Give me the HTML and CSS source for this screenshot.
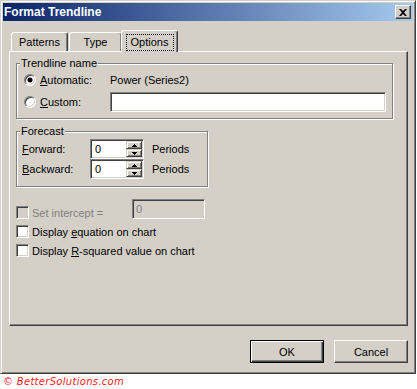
FILE: index.html
```html
<!DOCTYPE html>
<html>
<head>
<meta charset="utf-8">
<title>Format Trendline</title>
<link rel="stylesheet" href="styles.css">
</head>
<body>
<div class="window">
  <div class="titlebar">
    <span class="title">Format Trendline</span>
    <span class="close"><svg width="8" height="7" viewBox="0 0 8 7"><path d="M0 0h2l2 2 2-2h2L5 3.5 8 7H6L4 5 2 7H0l3-3.5z" fill="#000"/></svg></span>
  </div>
  <div class="tabs">
    <div class="tab tab-patterns">Patterns</div>
    <div class="tab tab-type">Type</div>
    <div class="tab tab-active"><span class="focus">Options</span></div>
  </div>
  <div class="panel">
    <fieldset class="group group-name">
      <legend>Trendline name</legend>
      <div class="row radio-row">
        <span class="radio checked"></span>
        <span class="rlabel"><u>A</u>utomatic:</span>
        <span class="value">Power (Series2)</span>
      </div>
      <div class="row radio-row">
        <span class="radio"></span>
        <span class="rlabel"><u>C</u>ustom:</span>
        <span class="textbox wide"></span>
      </div>
    </fieldset>
    <fieldset class="group group-forecast">
      <legend>Forecast</legend>
      <div class="spin-row">
        <span class="flabel"><u>F</u>orward:</span>
        <span class="spinbox">
          <span class="spin-text">0</span>
          <span class="spin-btns">
            <span class="spin-btn"><svg width="5" height="3" viewBox="0 0 5 3"><rect x="2" y="0" width="1" height="1"/><rect x="1" y="1" width="3" height="1"/><rect x="0" y="2" width="5" height="1"/></svg></span>
            <span class="spin-btn"><svg width="5" height="3" viewBox="0 0 5 3"><rect x="0" y="0" width="5" height="1"/><rect x="1" y="1" width="3" height="1"/><rect x="2" y="2" width="1" height="1"/></svg></span>
          </span>
        </span>
        <span class="periods">Periods</span>
      </div>
      <div class="spin-row">
        <span class="flabel"><u>B</u>ackward:</span>
        <span class="spinbox">
          <span class="spin-text">0</span>
          <span class="spin-btns">
            <span class="spin-btn"><svg width="5" height="3" viewBox="0 0 5 3"><rect x="2" y="0" width="1" height="1"/><rect x="1" y="1" width="3" height="1"/><rect x="0" y="2" width="5" height="1"/></svg></span>
            <span class="spin-btn"><svg width="5" height="3" viewBox="0 0 5 3"><rect x="0" y="0" width="5" height="1"/><rect x="1" y="1" width="3" height="1"/><rect x="2" y="2" width="1" height="1"/></svg></span>
          </span>
        </span>
        <span class="periods">Periods</span>
      </div>
    </fieldset>
    <div class="checks">
      <div class="check-row disabled">
        <span class="checkbox"></span>
        <span class="clabel intercept-label">Set intercept =</span>
        <span class="textbox intercept-input">0</span>
      </div>
      <div class="check-row">
        <span class="checkbox"></span>
        <span class="clabel">Display <u>e</u>quation on chart</span>
      </div>
      <div class="check-row">
        <span class="checkbox"></span>
        <span class="clabel">Display <u>R</u>-squared value on chart</span>
      </div>
    </div>
  </div>
  <div class="footer">
    <span class="btn default">OK</span>
    <span class="btn">Cancel</span>
  </div>
</div>
<div class="watermark">© BetterSolutions.com</div>
</body>
</html>
```

FILE: styles.css
```css
* { box-sizing: border-box; }

body {
  margin: 0;
  background: #fff;
  font-family: "Liberation Sans", Arial, sans-serif;
  font-size: 11px;
  color: #000;
}

u { text-decoration: underline; text-underline-offset: 1px; }

.window {
  width: 416px;
  height: 374px;
  background: #d4d0c8;
  border: 1px solid;
  border-color: #d4d0c8 #404040 #404040 #d4d0c8;
  box-shadow: inset 1px 1px 0 #fff, inset -1px -1px 0 #808080;
  padding: 2px;
  display: flex;
  flex-direction: column;
}

.titlebar {
  height: 18px;
  flex: none;
  background: linear-gradient(to right, #0a246a, #a6caf0);
  display: flex;
  align-items: center;
  justify-content: space-between;
  padding: 0 2px 0 1px;
}

.title {
  color: #fff;
  font-weight: bold;
  font-size: 12px;
  line-height: 18px;
}

.close {
  width: 16px;
  height: 14px;
  background: #d4d0c8;
  border: 1px solid;
  border-color: #fff #404040 #404040 #fff;
  box-shadow: inset -1px -1px 0 #808080;
  display: flex;
  align-items: center;
  justify-content: center;
}
.close svg { display: block; }

.tabs {
  display: flex;
  align-items: flex-end;
  height: 21px;
  flex: none;
  margin: 9px 0 0 8px;
}

.tab {
  height: 19px;
  background: #d4d0c8;
  border: 1px solid;
  border-bottom: 0;
  border-color: #fff #404040 transparent #fff;
  box-shadow: inset -1px 0 0 #808080;
  border-radius: 3px 3px 0 0;
  display: flex;
  align-items: center;
  justify-content: center;
  margin-right: 1px;
  line-height: 13px;
  padding-top: 1px;
}

.tab-patterns { width: 57px; }
.tab-type { width: 53px; }

.tab-active {
  width: 57px;
  height: 22px;
  margin: 0 -2px -1px -2px;
  position: relative;
  z-index: 1;
  align-items: flex-start;
  padding-top: 3px;
}

.focus {
  display: block;
  width: 48px;
  height: 17px;
  border: 1px dotted #000;
  text-align: center;
  line-height: 15px;
}

.panel {
  width: 399px;
  height: 275px;
  flex: none;
  margin-left: 6px;
  border: 1px solid;
  border-color: #fff #404040 #404040 #fff;
  box-shadow: inset -1px -1px 0 #808080;
}

.group {
  margin: 5px 0 0 6px;
  padding: 0 0 6px 3px;
  border: 1px solid #808080;
  box-shadow: 1px 1px 0 #fff, inset 1px 1px 0 #fff;
  min-width: 0;
}

.group legend {
  padding: 0 1px;
  line-height: 13px;
  background: #d4d0c8;
}

.group-name { width: 377px; }
.group-forecast { width: 192px; margin-top: 6px; padding-top: 1px; padding-bottom: 7px; }

.row {
  display: flex;
  align-items: center;
  height: 20px;
  padding-left: 4px;
}
.row + .row { margin-top: 2px; }

.radio {
  width: 12px;
  height: 12px;
  flex: none;
  border-radius: 50%;
  border: 1px solid;
  border-color: #808080 #fff #fff #808080;
  box-shadow: inset 1px 1px 0 #404040, inset -1px -1px 0 #d4d0c8;
  background: #fff;
  display: flex;
  align-items: center;
  justify-content: center;
}
.radio.checked::after {
  content: "";
  width: 4px;
  height: 4px;
  border-radius: 50%;
  background: #000;
  box-shadow: 0 0 0 0.5px #000;
}

.rlabel { margin-left: 4px; width: 70px; flex: none; }

.textbox {
  height: 20px;
  background: #fff;
  border: 1px solid;
  border-color: #808080 #fff #fff #808080;
  box-shadow: inset 1px 1px 0 #404040, inset -1px -1px 0 #d4d0c8;
  display: flex;
  align-items: center;
  padding-left: 4px;
}
.textbox.wide { width: 276px; }

.spin-row {
  display: flex;
  align-items: center;
  height: 20px;
  padding-left: 2px;
}

.flabel { width: 68px; flex: none; }

.spinbox {
  width: 54px;
  height: 20px;
  flex: none;
  background: #fff;
  border: 1px solid;
  border-color: #808080 #fff #fff #808080;
  box-shadow: inset 1px 1px 0 #404040, inset -1px -1px 0 #d4d0c8;
  padding: 1px;
  display: flex;
}

.spin-text { flex: 1; padding-left: 3px; line-height: 16px; }

.spin-btns {
  width: 16px;
  display: flex;
  flex-direction: column;
}

.spin-btn {
  height: 8px;
  background: #d4d0c8;
  border: 1px solid;
  border-color: #d4d0c8 #404040 #404040 #d4d0c8;
  box-shadow: inset 1px 1px 0 #fff, inset -1px -1px 0 #808080;
  display: flex;
  align-items: center;
  justify-content: center;
}
.spin-btn svg { display: block; fill: #000; }

.periods { margin-left: 8px; }

.checks { margin: 16px 0 0 6px; }

.check-row {
  display: flex;
  align-items: center;
  height: 19px;
}

.checkbox {
  width: 13px;
  height: 13px;
  flex: none;
  background: #fff;
  border: 1px solid;
  border-color: #808080 #fff #fff #808080;
  box-shadow: inset 1px 1px 0 #404040, inset -1px -1px 0 #d4d0c8;
}

.clabel { margin-left: 3px; }

.disabled .checkbox { background: #d4d0c8; }
.disabled .clabel { color: #808080; }

.intercept-label { width: 100px; flex: none; }

.intercept-input {
  width: 73px;
  align-self: flex-start;
  margin-top: -4px;
  background: #d4d0c8;
  color: #808080;
  padding-left: 3px;
}

.footer {
  display: flex;
  justify-content: flex-end;
  gap: 10px;
  margin: 14px 5px 0 0;
}

.btn {
  width: 74px;
  height: 23px;
  border: 1px solid;
  border-color: #fff #404040 #404040 #fff;
  box-shadow: inset -1px -1px 0 #808080;
  display: flex;
  align-items: center;
  justify-content: center;
}

.btn.default {
  border-color: #000;
  box-shadow: inset 1px 1px 0 #fff, inset -1px -1px 0 #404040, inset -2px -2px 0 #808080;
}

.watermark {
  font-family: "DejaVu Sans", Verdana, sans-serif;
  font-style: italic;
  font-size: 10px;
  line-height: 12px;
  letter-spacing: 0.3px;
  color: #f22;
  margin: 2px 0 0 3px;
}
```
